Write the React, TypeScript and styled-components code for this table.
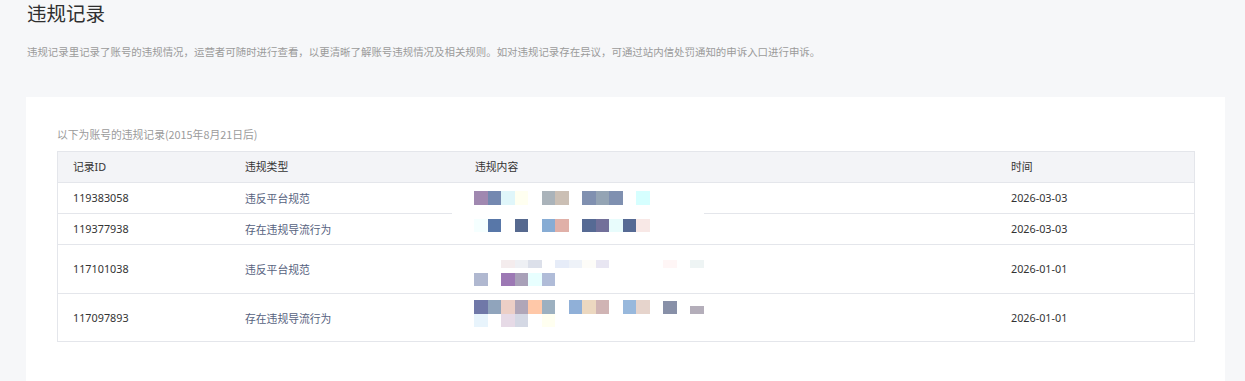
import React from 'react';
import styled, { createGlobalStyle } from 'styled-components';

const GlobalStyle = createGlobalStyle`
  html, body {
    margin: 0;
    padding: 0;
    background: #f6f7f9;
  }
  body {
    font-family: 'Noto Sans CJK SC', 'Noto Sans', 'Liberation Sans', sans-serif;
    color: #333;
  }
`;

const Page = styled.div`
  padding: 2px 20px 0 26px;
`;

const Title = styled.h1`
  margin: 0 0 0 1px;
  font-size: 19.5px;
  font-weight: 400;
  line-height: 22px;
  color: #2f2f2f;
`;

const Intro = styled.p`
  margin: 19px 0 0 1px;
  font-size: 10.45px;
  line-height: 18px;
  color: #9b9b9b;
  white-space: nowrap;
`;

const Card = styled.section`
  margin-top: 36px;
  width: 1199px;
  min-height: 290px;
  box-sizing: border-box;
  padding: 28px 30px 40px 31px;
  background: #fff;
`;

const Caption = styled.p`
  margin: 0 0 8px;
  font-size: 10.8px;
  line-height: 18px;
  color: #9b9b9b;
`;

const Table = styled.div`
  border: 1px solid #e4e6eb;
  border-bottom: none;
  font-size: 10.8px;
`;

const Row = styled.div<{ $height: number; $head?: boolean }>`
  display: grid;
  grid-template-columns: 172px 230px 536px 1fr;
  align-items: center;
  height: ${p => p.$height}px;
  border-bottom: 1px solid #e4e6eb;
  background: ${p => (p.$head ? '#f3f4f7' : 'transparent')};
`;

const Cell = styled.div<{ $tone?: 'type' }>`
  padding-left: 15px;
  line-height: 18px;
  color: ${p => (p.$tone === 'type' ? '#56627e' : '#333')};
  font-family: ${p => (p.$tone === 'type' ? "'Noto Sans CJK SC', sans-serif" : "'Noto Sans', 'Noto Sans CJK SC', sans-serif")};
`;

const MosaicCell = styled.div<{ $shift: number }>`
  padding-left: 14px;
  margin-top: ${p => Math.max(0, p.$shift * 2)}px;
  margin-bottom: ${p => Math.max(0, -p.$shift * 2)}px;
`;

const Backdrop = styled.div<{ $cover?: boolean }>`
  width: ${p => (p.$cover ? '230px' : 'auto')};
  margin: ${p => (p.$cover ? '-3px 0 0 -22px' : '0')};
  padding: ${p => (p.$cover ? '7px 0 0 22px' : '0')};
  height: ${p => (p.$cover ? '25px' : 'auto')};
  background: ${p => (p.$cover ? '#fff' : 'transparent')};
`;

const MosaicLine = styled.div<{ $h?: number }>`
  display: flex;
  height: ${p => p.$h ?? 13.5}px;
  align-items: flex-end;
`;

const Tile = styled.span<{ $c: string; $h?: number }>`
  display: block;
  width: 13.5px;
  height: ${p => p.$h ?? 13.5}px;
  background: ${p => p.$c || 'transparent'};
`;

type Line = { h?: number; tiles: (string | [string, number])[] };

const Mosaic = ({ lines, cover }: { lines: Line[]; cover?: boolean }) => (
  <Backdrop $cover={cover}>
    {lines.map((line, i) => (
      <MosaicLine key={i} $h={line.h}>
        {line.tiles.map((t, j) =>
          Array.isArray(t) ? <Tile key={j} $c={t[0]} $h={t[1]} /> : <Tile key={j} $c={t} $h={line.h} />
        )}
      </MosaicLine>
    ))}
  </Backdrop>
);

const records = [
  {
    id: '119383058',
    type: '违反平台规范',
    time: '2026-03-03',
    height: 30,
    shift: 0,
    cover: false,
    lines: [
      {
        tiles: ['#a088b0', '#7488b0', '#e0f6fa', '#fffff0', '', '#aab3ba', '#cbbfb4', '', '#8090b0', '#94a4b4', '#7f90b0', '', '#d6ffff'],
      },
    ],
  },
  {
    id: '119377938',
    type: '存在违规导流行为',
    time: '2026-03-03',
    height: 30,
    shift: 0,
    cover: true,
    lines: [
      {
        tiles: ['#f5ffff', '#5877a8', '', '#56698f', '', '#87acd4', '#e0b0a8', '', '#566a94', '#72709a', '#e8fcfc', '#566a94', '#f8e8e6'],
      },
    ],
  },
  {
    id: '117101038',
    type: '违反平台规范',
    time: '2026-01-01',
    height: 48,
    shift: 4,
    cover: false,
    lines: [
      {
        h: 8,
        tiles: ['', '', '#f4eced', '#eef0f4', '#dce0ea', '', '#e6ecf8', '#eef2f8', '#fdfcf8', '#e8e6f2', '', '', '', '', '#fff6f6', '', '#eef4f4'],
      },
      { h: 5, tiles: [] },
      { tiles: ['#b0b8d0', '', '#9c78b4', '#a8a0b8', '#e8ffff', '#b0bcd8'] },
    ],
  },
  {
    id: '117097893',
    type: '存在违规导流行为',
    time: '2026-01-01',
    height: 47,
    shift: -4,
    cover: false,
    lines: [
      {
        tiles: [
          '#7078a8', '#90a4bc', '#eccfc6', '#b0a6b8', '#ffc8a8', '#9cb0c0', '', '#90b0d8', '#ecd8c0', '#d0b4b4', '', '#98b8dc', '#e6d4cc', '',
          ['#8890a8', 12.5], '', ['#b4aeba', 8],
        ] as (string | [string, number])[],
      },
      { tiles: ['#e8f4fc', '', '#e6dae6', '#d4d8e4', '', '#fffff0'] },
    ],
  },
];

export default function App() {
  return (
    <>
      <GlobalStyle />
      <Page>
        <Title>违规记录</Title>
        <Intro>
          违规记录里记录了账号的违规情况，运营者可随时进行查看，以更清晰了解账号违规情况及相关规则。如对违规记录存在异议，可通过站内信处罚通知的申诉入口进行申诉。
        </Intro>
        <Card>
          <Caption>以下为账号的违规记录(2015年8月21日后)</Caption>
          <Table>
            <Row $height={30} $head>
              <Cell>记录ID</Cell>
              <Cell>违规类型</Cell>
              <Cell>违规内容</Cell>
              <Cell>时间</Cell>
            </Row>
            {records.map(r => (
              <Row key={r.id} $height={r.height}>
                <Cell>{r.id}</Cell>
                <Cell $tone="type">{r.type}</Cell>
                <MosaicCell $shift={r.shift}>
                  <Mosaic lines={r.lines as Line[]} cover={r.cover} />
                </MosaicCell>
                <Cell>{r.time}</Cell>
              </Row>
            ))}
          </Table>
        </Card>
      </Page>
    </>
  );
}
